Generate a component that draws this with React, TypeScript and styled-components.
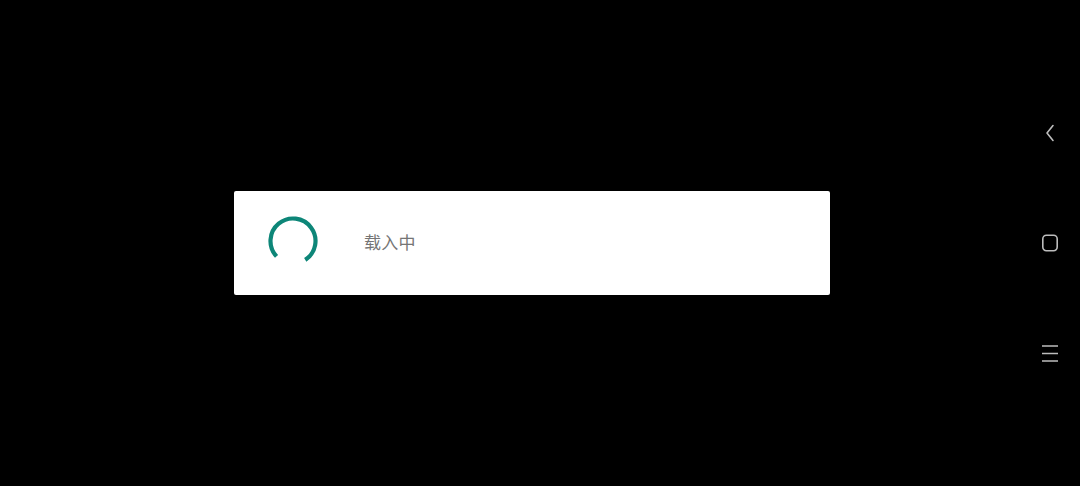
import React, { ReactElement } from 'react';
import styled, { createGlobalStyle } from 'styled-components';

const GlobalStyle = createGlobalStyle`
  html, body {
    margin: 0;
    padding: 0;
    background: #000000;
    width: 100%;
    height: 100%;
    overflow: hidden;
  }
  #root {
    height: 100%;
  }
`;

const Spinner = (): ReactElement => (
  <SpinnerSvg viewBox="0 0 50 50">
    <path
      d="M 8.54 40.35 A 22.5 22.5 0 1 1 37.25 43.87"
      fill="none"
      stroke="#0d8678"
      strokeWidth="4.2"
      strokeLinecap="butt"
    />
  </SpinnerSvg>
);

const BackIcon = (): ReactElement => (
  <NavSvg viewBox="0 0 20 20">
    <path d="M 13 2.5 L 7 10 L 13 17.5" fill="none" stroke="#bdbdbd" strokeWidth="1.6" strokeLinejoin="round" strokeLinecap="round" />
  </NavSvg>
);

const HomeIcon = (): ReactElement => (
  <NavSvg viewBox="0 0 20 20">
    <rect x="2.8" y="2.3" width="14.4" height="15.4" rx="3.6" fill="none" stroke="#bdbdbd" strokeWidth="1.6" />
  </NavSvg>
);

const MenuIcon = (): ReactElement => (
  <NavSvg viewBox="0 0 20 20">
    <path d="M 2 3 H 18 M 2 10.5 H 18 M 2 18 H 18" fill="none" stroke="#bdbdbd" strokeWidth="1.6" />
  </NavSvg>
);

const App = (): ReactElement => (
  <>
    <GlobalStyle />
    <Screen>
      <Main>
        <Dialog>
          <Spinner />
          <Message>载入中</Message>
        </Dialog>
      </Main>
      <NavBar>
        <NavButton><BackIcon /></NavButton>
        <NavButton><HomeIcon /></NavButton>
        <NavButton><MenuIcon /></NavButton>
      </NavBar>
    </Screen>
  </>
);
export default App;

const Screen = styled.div`
  display: flex;
  flex-direction: row;
  width: 1080px;
  height: 486px;
  background: #000000;
`;

const Main = styled.div`
  flex: 1;
  display: flex;
  align-items: flex-start;
  padding: 191px 0 0 234px;
`;

const Dialog = styled.div`
  display: flex;
  align-items: center;
  box-sizing: border-box;
  width: 596px;
  height: 104px;
  padding: 0 0 4px 34px;
  background: #ffffff;
  border-radius: 2px;
`;

const SpinnerSvg = styled.svg`
  width: 50px;
  height: 50px;
  flex-shrink: 0;
  margin-right: 46px;
`;

const Message = styled.div`
  font-family: "Noto Sans CJK SC", "Noto Sans", sans-serif;
  font-size: 17px;
  font-weight: normal;
  color: #757575;
  letter-spacing: 0.3px;
`;

const NavBar = styled.nav`
  width: 60px;
  display: flex;
  flex-direction: column;
  align-items: center;
  padding-top: 123px;
  gap: 90px;
`;

const NavButton = styled.div`
  width: 20px;
  height: 20px;
  display: flex;
  align-items: center;
  justify-content: center;
`;

const NavSvg = styled.svg`
  width: 20px;
  height: 20px;
`;
